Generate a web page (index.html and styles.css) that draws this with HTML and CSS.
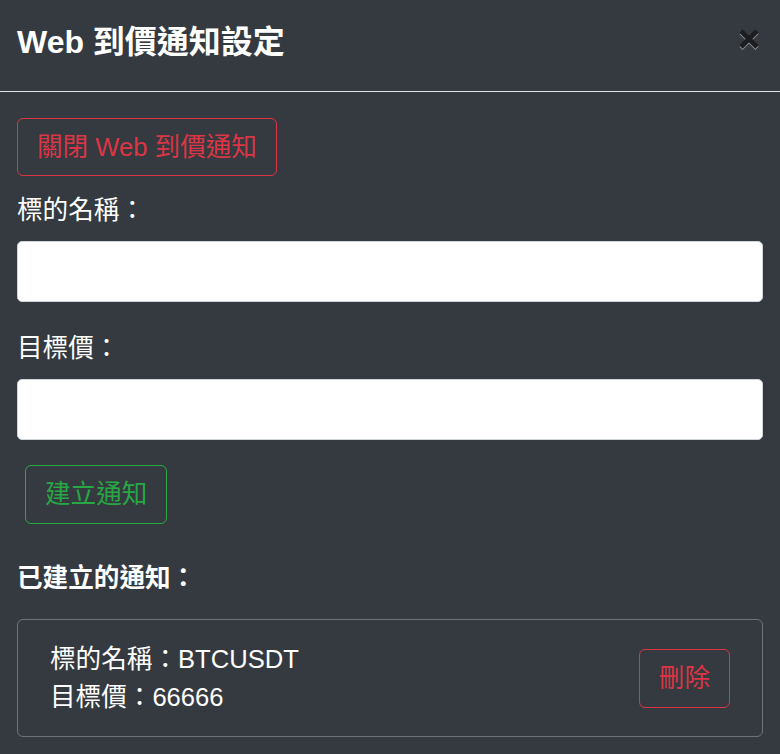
FILE: index.html
```html
<!DOCTYPE html>
<html lang="zh-Hant">
<head>
<meta charset="utf-8">
<title>Web 到價通知設定</title>
<link rel="stylesheet" href="styles.css">
</head>
<body>
<div class="modal">
  <div class="modal-header">
    <h5 class="modal-title">Web 到價通知設定</h5>
    <button class="close" type="button" aria-label="Close">
      <svg width="22" height="22" viewBox="0 0 22 22">
        <g stroke="#8e9196" stroke-width="4.6" stroke-linecap="butt" transform="translate(0,1.4)">
          <line x1="3" y1="3" x2="19" y2="19"/>
          <line x1="19" y1="3" x2="3" y2="19"/>
        </g>
        <g stroke="#1b1d21" stroke-width="4.6" stroke-linecap="butt">
          <line x1="3" y1="3" x2="19" y2="19"/>
          <line x1="19" y1="3" x2="3" y2="19"/>
        </g>
      </svg>
    </button>
  </div>
  <div class="modal-body">
    <button class="btn btn-red btn-toggle" type="button">關閉 Web 到價通知</button>
    <div class="group">
      <label class="label">標的名稱：</label>
      <input class="input" type="text">
    </div>
    <div class="group">
      <label class="label">目標價：</label>
      <input class="input" type="text">
    </div>
    <button class="btn btn-green btn-create" type="button">建立通知</button>
    <h6 class="list-title">已建立的通知：</h6>
    <div class="card">
      <div class="card-text">
        <div>標的名稱：BTCUSDT</div>
        <div>目標價：66666</div>
      </div>
      <button class="btn btn-red btn-delete" type="button">刪除</button>
    </div>
  </div>
</div>
</body>
</html>
```
FILE: styles.css
```css
* { box-sizing: border-box; }
html, body {
  margin: 0;
  padding: 0;
  background: #343a40;
}
body {
  font-family: "Liberation Sans", "Noto Sans CJK TC", sans-serif;
  font-size: 25.6px;
  line-height: 38px;
  color: #ffffff;
  height: 754px;
  overflow: hidden;
}
.modal-header {
  display: flex;
  justify-content: space-between;
  align-items: flex-start;
  padding: 18px 17px 25px 17px;
  border-bottom: 1px solid #dee2e6;
}
.modal-title {
  margin: 0;
  font-size: 32px;
  line-height: 48px;
  font-weight: 700;
}
.close {
  margin: 10px 3px 0 0;
  padding: 0;
  border: 0;
  background: transparent;
  width: 22px;
  height: 22px;
  display: block;
}
.close svg { display: block; }
.modal-body {
  padding: 26px 17px;
}
.btn {
  font-family: inherit;
  font-size: 25.6px;
  line-height: 38px;
  padding: 9px 19px;
  border-radius: 6px;
  background: transparent;
  display: inline-block;
}
.btn-red {
  color: #dc3545;
  border: 1px solid #dc3545;
}
.btn-green {
  color: #28a745;
  border: 1px solid #28a745;
}
.btn-toggle {
  margin-bottom: 15px;
}
.group {
  margin-bottom: 27px;
}
.group + .group { margin-bottom: 25px; }
.label {
  display: block;
  margin-bottom: 12px;
}
.input {
  display: block;
  width: 100%;
  height: 61px;
  background: #ffffff;
  border: 1px solid #ced4da;
  border-radius: 5px;
  font-size: 25.6px;
  padding: 9px 19px;
}
.btn-create {
  margin-left: 8px;
  padding-bottom: 10px;
}
.btn-delete {
  padding-bottom: 10px;
}
.list-title {
  margin: 35px 0 22px 0;
  font-size: 25.6px;
  line-height: 38px;
  font-weight: 700;
}
.card {
  display: flex;
  justify-content: space-between;
  align-items: center;
  border: 1px solid #6c757d;
  border-radius: 6px;
  padding: 20px 32px;
}
.card-text div {
  line-height: 38px;
}
```
